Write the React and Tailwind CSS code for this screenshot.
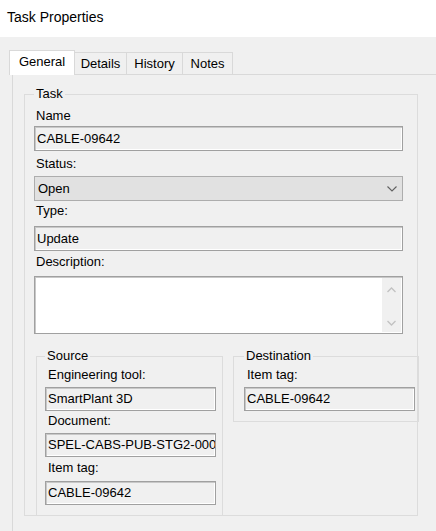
import React from "react";

function TextBox({ text, h25 }) {
  return (
    <div
      className={`${h25 ? "h-[25px]" : "h-[24px]"} w-full flex items-center border border-[#a0a0a0] bg-[#f0f0f0] pl-[2px] shadow-[inset_1px_1px_0_#c8c8c8,inset_-1px_-1px_0_#ffffff] leading-[16px] whitespace-nowrap overflow-hidden`}
    >
      {text}
    </div>
  );
}

function SmallBox({ text }) {
  return (
    <div className="h-[24px] w-[171px] flex items-center border border-[#a0a0a0] bg-[#f0f0f0] pl-[2px] shadow-[inset_1px_1px_0_#c8c8c8,inset_-1px_-1px_0_#ffffff] leading-[16px] whitespace-nowrap overflow-hidden">
      {text}
    </div>
  );
}

export default function App() {
  return (
    <div className="w-[436px] h-[531px] overflow-hidden bg-[#f0f0f0] flex flex-col text-[13px] text-black font-['Liberation_Sans',Arial,sans-serif]">
      <div className="h-[37px] bg-white pl-[7px] pt-[9px] text-[14px] leading-[16px]">
        Task Properties
      </div>

      <div className="flex items-end pl-[9px] pt-[13px] h-[37px]">
        <div className="relative z-10 -mb-[1px] h-[25px] w-[66px] bg-white border-l border-t border-r border-[#d9d9d9] text-center pt-[3px] leading-[16px]">
          General
        </div>
        <div className="h-[22px] w-[52px] border-t border-r border-[#d9d9d9] text-center pt-[3px] leading-[16px]">
          Details
        </div>
        <div className="h-[22px] w-[56px] border-t border-r border-[#d9d9d9] text-center pt-[3px] leading-[16px]">
          History
        </div>
        <div className="h-[22px] w-[50px] border-t border-r border-[#d9d9d9] text-center pt-[3px] leading-[16px]">
          Notes
        </div>
      </div>

      <div className="flex-1 ml-[12px] border-l border-t border-[#d9d9d9] bg-[#f0f0f0]">
        <fieldset className="min-w-0 ml-[11px] mt-[11px] w-[394px] border border-[#dcdcdc] pl-[9px] pr-[14px] pb-0">
          <legend className="px-[2px] leading-[16px]">Task</legend>

          <div className="mt-[6px] ml-[2px] leading-[16px]">Name</div>
          <div className="mt-[2px]">
            <TextBox text="CABLE-09642" h25 />
          </div>

          <div className="mt-[5px] ml-[2px] leading-[16px]">Status:</div>
          <div className="mt-[4px] h-[25px] w-full flex items-center justify-between border border-[#adadad] bg-[#e1e1e1] pl-[3px] pr-[5px] leading-[16px]">
            <span>Open</span>
            <svg width="10" height="6" viewBox="0 0 10 6" className="mt-[1px]">
              <polyline points="0.5,0.5 5,5 9.5,0.5" fill="none" stroke="#606060" strokeWidth="1.1" />
            </svg>
          </div>

          <div className="mt-[2px] ml-[2px] leading-[16px]">Type:</div>
          <div className="mt-[7px]">
            <TextBox text="Update" h25 />
          </div>

          <div className="mt-[3px] ml-[2px] leading-[16px]">Description:</div>
          <div className="mt-[6px] h-[58px] w-full flex justify-end border border-[#a0a0a0] bg-white shadow-[inset_1px_1px_0_#c8c8c8]">
            <div className="w-[19px] my-[1px] mr-[1px] bg-[#f0f0f0] flex flex-col items-center justify-between pt-[9px] pb-[6px]">
              <svg width="9" height="6" viewBox="0 0 9 6">
                <polyline points="0.5,5 4.5,1 8.5,5" fill="none" stroke="#c2c2c2" strokeWidth="1.3" />
              </svg>
              <svg width="9" height="6" viewBox="0 0 9 6">
                <polyline points="0.5,1 4.5,5 8.5,1" fill="none" stroke="#c2c2c2" strokeWidth="1.3" />
              </svg>
            </div>
          </div>

          <div className="mt-[14px] -mb-[1px] flex items-start gap-[10px]">
            <fieldset className="min-w-0 ml-[2px] shrink-0 w-[187px] border border-[#dcdcdc] pl-[8px] pr-[6px] pb-[10px]">
              <legend className="px-[2px] leading-[16px]">Source</legend>
              <div className="mt-[3px] ml-[3px] leading-[16px]">Engineering tool:</div>
              <div className="mt-[4px]">
                <SmallBox text="SmartPlant 3D" />
              </div>
              <div className="mt-[2px] ml-[3px] leading-[16px]">Document:</div>
              <div className="mt-[4px]">
                <SmallBox text="SPEL-CABS-PUB-STG2-0001" />
              </div>
              <div className="mt-[3px] ml-[3px] leading-[16px]">Item tag:</div>
              <div className="mt-[5px]">
                <SmallBox text="CABLE-09642" />
              </div>
            </fieldset>

            <fieldset className="min-w-0 shrink-0 w-[186px] border border-[#dcdcdc] pl-[10px] pr-[3px] pb-[10px]">
              <legend className="px-[2px] leading-[16px]">Destination</legend>
              <div className="mt-[3px] ml-[3px] leading-[16px]">Item tag:</div>
              <div className="mt-[4px]">
                <SmallBox text="CABLE-09642" />
              </div>
            </fieldset>
          </div>
        </fieldset>
      </div>
    </div>
  );
}
